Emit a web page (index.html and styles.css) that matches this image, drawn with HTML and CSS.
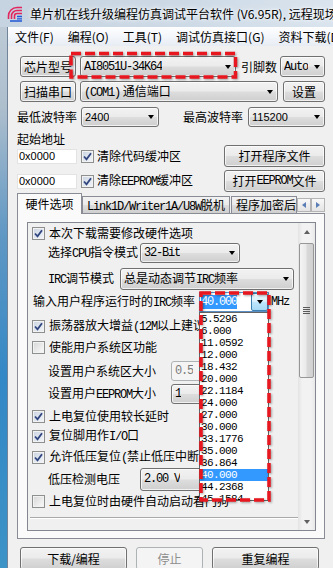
FILE: index.html
```html
<!DOCTYPE html>
<html lang="zh">
<head>
    <meta charset="UTF-8">
    <meta name="viewport" content="width=device-width, initial-scale=1.0">
    <title>STC-ISP</title>
    <link rel="stylesheet" href="styles.css">
</head>
<body>
<div class="window">
    <div class="titlebar">
        <svg class="app-icon" viewBox="0 0 16 16">
            <g fill="none" stroke="#e2275f" stroke-width="1.6">
                <path d="M1.5 13 V10 A8.5 8.5 0 0 1 10 1.5 H15"/>
                <path d="M4.5 13 V10 A5.5 5.5 0 0 1 10 4.5 H15"/>
                <path d="M7.5 13 V10 A2.5 2.5 0 0 1 10 7.5 H15"/>
            </g>
            <path d="M3 15 H15 M10 10.5 H15 M10 12.8 H15" stroke="#2257d6" stroke-width="1.3"/>
        </svg>
        <span class="title">单片机在线升级编程仿真调试平台软件 (V6.95R), 远程现场升级</span>
    </div>
    <div class="frame-left"></div>
    <div class="client">
        <div class="menubar">
            <span>文件(F)</span>
            <span>编程(O)</span>
            <span>工具(T)</span>
            <span>调试仿真接口(G)</span>
            <span>资料下载(D)</span>
        </div>

        <div class="main">
            <div class="row r-chip">
                <div class="btn b-side">芯片型号</div>
                <div class="combo c-chip"><span class="val en">AI8051U-34K64</span></div>
                <span class="pins-lbl">引脚数</span>
                <div class="combo c-pins"><span class="val en">Auto</span></div>
            </div>
            <div class="row r-port">
                <div class="btn b-side">扫描串口</div>
                <div class="combo c-port"><span class="val"><span class="en">(COM1)</span> 通信端口</span></div>
                <div class="btn b-set">设置</div>
            </div>
            <div class="row r-baud">
                <span class="baud-lbl">最低波特率</span>
                <div class="combo c-baud"><span class="val sans">2400</span></div>
                <span class="baud-lbl baud-hi">最高波特率</span>
                <div class="combo c-baud"><span class="val sans">115200</span></div>
            </div>
            <div class="addr-lbl">起始地址</div>
            <div class="row r-file">
                <div class="edit sans">0x0000</div>
                <span class="chk on"><svg viewBox="0 0 11 11"><path d="M2 5.5 L4.5 8.3 L9 2.2"/></svg></span>
                <span>清除代码缓冲区</span>
                <div class="btn b-file">打开程序文件</div>
            </div>
            <div class="row r-file">
                <div class="edit sans">0x0000</div>
                <span class="chk on"><svg viewBox="0 0 11 11"><path d="M2 5.5 L4.5 8.3 L9 2.2"/></svg></span>
                <span>清除<span class="en">EEPROM</span>缓冲区</span>
                <div class="btn b-file">打开<span class="en">EEPROM</span>文件</div>
            </div>

            <div class="tabs">
                <div class="tab on">硬件选项</div>
                <div class="tab t-link"><span class="en">Link1D/Writer1A/U8W</span>脱机</div>
                <div class="tab t-enc">程序加密后传输</div>
                <div class="tab-spin">
                    <span class="spin-btn"><i class="tri-l"></i></span>
                    <span class="spin-btn"><i class="tri-r"></i></span>
                </div>
            </div>
            <div class="tabpanel">
                <div class="optbox">
                    <div class="opts">
                        <div class="opt">
                            <span class="chk on"><svg viewBox="0 0 11 11"><path d="M2 5.5 L4.5 8.3 L9 2.2"/></svg></span>
                            <span>本次下载需要修改硬件选项</span>
                        </div>
                        <div class="opt ind">
                            <span class="lbl w92">选择<span class="en">CPU</span>指令模式</span>
                            <div class="combo c-cpu"><span class="val en">32-Bit</span></div>
                        </div>
                        <div class="opt ind mt6">
                            <span class="lbl w72"><span class="en">IRC</span>调节模式</span>
                            <div class="combo c-irc"><span class="val">总是动态调节<span class="en">IRC</span>频率</span></div>
                        </div>
                        <div class="opt sub mt3">
                            <span class="lbl w166">输入用户程序运行时的<span class="en">IRC</span>频率</span>
                            <div class="combo open">
                                <span class="val en"><span class="sel">40.000</span></span>
                                <span class="dropbtn"></span>
                                <div class="droplist">
                                    <div>5.5296</div>
                                    <div>6.000</div>
                                    <div>11.0592</div>
                                    <div>12.000</div>
                                    <div>18.432</div>
                                    <div>20.000</div>
                                    <div>22.1184</div>
                                    <div>24.000</div>
                                    <div>27.000</div>
                                    <div>30.000</div>
                                    <div>33.1776</div>
                                    <div>35.000</div>
                                    <div>36.864</div>
                                    <div class="hi">40.000</div>
                                    <div>44.2368</div>
                                    <div>45.1584</div>
                                </div>
                            </div>
                            <span class="en mhz">MHz</span>
                        </div>
                        <div class="opt mt4">
                            <span class="chk on"><svg viewBox="0 0 11 11"><path d="M2 5.5 L4.5 8.3 L9 2.2"/></svg></span>
                            <span>振荡器放大增益<span class="en">(12M</span>以上建议选择<span class="en">)</span></span>
                        </div>
                        <div class="opt mt1">
                            <span class="chk"></span>
                            <span>使能用户系统区功能</span>
                        </div>
                        <div class="opt ind mt4">
                            <span class="lbl w123">设置用户系统区大小</span>
                            <div class="combo c-small off"><span class="val en">0.5</span></div>
                        </div>
                        <div class="opt ind mt3">
                            <span class="lbl w123">设置用户<span class="en">EEPROM</span>大小</span>
                            <div class="combo c-small"><span class="val en">1</span></div>
                        </div>
                        <div class="opt mt2">
                            <span class="chk on"><svg viewBox="0 0 11 11"><path d="M2 5.5 L4.5 8.3 L9 2.2"/></svg></span>
                            <span>上电复位使用较长延时</span>
                        </div>
                        <div class="opt">
                            <span class="chk on"><svg viewBox="0 0 11 11"><path d="M2 5.5 L4.5 8.3 L9 2.2"/></svg></span>
                            <span>复位脚用作<span class="en">I/O</span>口</span>
                        </div>
                        <div class="opt mt1">
                            <span class="chk on"><svg viewBox="0 0 11 11"><path d="M2 5.5 L4.5 8.3 L9 2.2"/></svg></span>
                            <span>允许低压复位<span class="en">(</span>禁止低压中断<span class="en">)</span></span>
                        </div>
                        <div class="opt ind mt2">
                            <span class="lbl w92">低压检测电压</span>
                            <div class="combo c-volt"><span class="val en">2.00 V</span></div>
                        </div>
                        <div class="opt mt2">
                            <span class="chk"></span>
                            <span>上电复位时由硬件自动启动看门狗</span>
                        </div>
                        <div class="opt-sep"></div>
                    </div>
                    <div class="vscroll">
                        <div class="sb-arrow"><i class="tri-up"></i></div>
                        <div class="sb-thumb"><i class="grip"></i></div>
                        <div class="sb-arrow sb-down"><i class="tri-down"></i></div>
                    </div>
                </div>
            </div>

            <div class="row r-actions">
                <div class="btn b-act">下载/编程</div>
                <div class="btn b-stop off">停止</div>
                <div class="btn b-act">重复编程</div>
            </div>
        </div>
    </div>

    <svg class="marks" width="333" height="568" viewBox="0 0 333 568">
        <rect x="71" y="53.5" width="164.5" height="23.5"/>
        <rect x="201" y="293" width="68" height="207"/>
    </svg>
</div>
</body>
</html>
```

FILE: styles.css
```css
* {
    box-sizing: border-box;
}
body {
    margin: 0;
    font-family: "Noto Sans CJK SC", "Noto Sans", sans-serif;
    font-size: 12px;
    line-height: 14px;
    color: #000;
}
.en {
    font-family: "Liberation Mono", monospace;
    font-size: 12px;
    letter-spacing: -1.2px;
}
.sans {
    font-family: "Liberation Sans", Arial, sans-serif;
    font-size: 11px;
}

/* window frame */
.window {
    position: relative;
    width: 333px;
    height: 568px;
    overflow: hidden;
    display: grid;
    grid-template-columns: 8px 325px;
    grid-template-rows: 27px 541px;
}
.titlebar {
    grid-column: 1 / 3;
    display: flex;
    align-items: center;
    padding-left: 7px;
    white-space: nowrap;
    overflow: hidden;
    background: linear-gradient(90deg, #c6d3e0 0%, #cddae6 55%, #dae4ee 100%);
}
.app-icon {
    flex: none;
    width: 16px;
    height: 16px;
    margin-right: 7px;
}
.title {
    text-shadow: 0 0 6px #fff, 0 0 3px #fff;
}
.frame-left {
    background: linear-gradient(#bdcad6 0%, #adbecd 15%, #6198c4 38%, #3388c6 65%, #3c93c6 100%);
    border-right: 1px solid #71849a;
}
.client {
    background: #f0f0f0;
    overflow: hidden;
}
.menubar {
    height: 19px;
    display: flex;
    align-items: center;
    gap: 14px;
    padding-left: 7px;
    white-space: nowrap;
    background: linear-gradient(#fefeff, #f3f6fa 50%, #e7ecf4);
}

/* main controls */
.main {
    padding: 0 8px 0 9px;
}
.row {
    display: flex;
    align-items: center;
    white-space: nowrap;
}
.r-chip {
    height: 21px;
    margin-top: 10px;
    padding-left: 3px;
}
.r-port {
    height: 21px;
    margin-top: 4px;
    padding-left: 3px;
}
.r-baud {
    height: 20px;
    margin-top: 5px;
}
.addr-lbl {
    height: 13px;
    line-height: 13px;
    margin-top: 5px;
}
.r-file {
    height: 22px;
}
.r-file + .r-file {
    margin-top: 3px;
}
.r-actions {
    height: 23px;
    margin-top: 8px;
    padding-left: 3px;
}

.btn {
    height: 100%;
    flex: none;
    display: flex;
    align-items: center;
    justify-content: center;
    border: 1px solid #707070;
    border-radius: 3px;
    background: linear-gradient(#f2f2f2, #ebebeb 48%, #dddddd 52%, #cfcfcf);
    box-shadow: inset 0 0 0 1px rgba(255, 255, 255, 0.7);
}
.btn.off {
    color: #8d8d8d;
    border-color: #adb2b5;
    background: #f4f4f4;
    box-shadow: none;
}
.b-side { width: 56px; }
.b-set { width: 42px; margin-left: 5px; }
.b-file { width: 101px; margin-left: auto; }
.b-act { width: 107px; }
.b-stop { width: 67px; margin: 0 9px; }

.combo {
    height: 100%;
    flex: none;
    display: flex;
    align-items: center;
    padding-left: 3px;
    border: 1px solid #707070;
    border-radius: 3px;
    background: linear-gradient(#f2f2f2, #ebebeb 48%, #dddddd 52%, #cfcfcf);
    box-shadow: inset 0 0 0 1px rgba(255, 255, 255, 0.7);
}
.combo::after {
    content: "";
    flex: none;
    margin-left: auto;
    margin-right: 4px;
    border-left: 3.5px solid transparent;
    border-right: 3.5px solid transparent;
    border-top: 4px solid #000;
}
.combo .val {
    overflow: hidden;
}
.combo.off {
    color: #7a7a7a;
    border-color: #adb2b5;
    background: #f4f4f4;
    box-shadow: none;
}
.combo.off::after {
    border-top-color: #a0a0a0;
}
.c-chip { width: 156px; margin-left: 4px; }
.pins-lbl { margin-left: 5px; }
.c-pins { width: 45px; margin-left: 3px; }
.c-port { width: 198px; margin-left: 4px; }
.baud-lbl { width: 64px; }
.baud-hi { width: 65px; margin-left: 24px; }
.c-baud { width: 78px; }
.c-baud + .baud-hi + .c-baud { width: 77px; }

.edit {
    width: 60px;
    height: 15px;
    margin-right: 4px;
    padding-left: 1px;
    line-height: 13px;
    background: #fff;
    border: 1px solid #e3e3e3;
}

.chk {
    flex: none;
    width: 13px;
    height: 13px;
    margin-right: 3px;
    border: 1px solid #8e8f8f;
    background: linear-gradient(135deg, #d6d6d6, #fbfbfb);
    box-shadow: inset 0 0 0 1px #f2f2f2;
}
.chk.on {
    background: linear-gradient(135deg, #c9d3e0, #f4f7fb);
}
.chk svg {
    display: block;
    width: 11px;
    height: 11px;
}
.chk path {
    fill: none;
    stroke: #31467f;
    stroke-width: 1.8;
}

/* tabs */
.tabs {
    position: relative;
    z-index: 1;
    display: flex;
    align-items: flex-end;
    height: 20px;
    margin-top: 1px;
    white-space: nowrap;
}
.tab {
    flex: none;
    height: 17px;
    padding-left: 4px;
    line-height: 15px;
    overflow: hidden;
    border: 1px solid #898c95;
    border-bottom: none;
    background: linear-gradient(#f2f2f2, #ebebeb 48%, #dddddd 52%, #cfcfcf);
}
.tab.on {
    width: 65px;
    height: 21px;
    margin-bottom: -1px;
    padding: 0;
    line-height: 19px;
    text-align: center;
    background: #fafafa;
}
.t-link { width: 148px; }
.t-enc { width: 66px; margin-left: 1px; padding-left: 4px; }
.tab-spin {
    display: flex;
    height: 14px;
    margin-bottom: 1px;
}
.spin-btn {
    width: 14px;
    height: 14px;
    display: flex;
    align-items: center;
    justify-content: center;
    border: 1px solid #b4b4b4;
    background: linear-gradient(#f8f8f8, #e4e4e4);
}
.tri-l {
    border-top: 3.5px solid transparent;
    border-bottom: 3.5px solid transparent;
    border-right: 4px solid #5a7db5;
}
.tri-r {
    border-top: 3.5px solid transparent;
    border-bottom: 3.5px solid transparent;
    border-left: 4px solid #5a7db5;
}

.tabpanel {
    display: flex;
    height: 326px;
    padding: 8px 8px 7px 9px;
    border: 1px solid #898c95;
    background: #fafafa;
}
.optbox {
    flex: 1;
    display: flex;
    border: 1px solid #828790;
    background: #f0f0f0;
}
.opts {
    flex: 1;
    min-width: 0;
}
.opt {
    height: 20px;
    display: flex;
    align-items: center;
    padding-left: 4px;
    white-space: nowrap;
}
.opt .chk {
    margin-right: 4px;
}
.opt.ind { padding-left: 20px; }
.opt.sub { padding-left: 5px; }
.mt1 { margin-top: 1px; }
.mt2 { margin-top: 2px; }
.mt3 { margin-top: 3px; }
.mt4 { margin-top: 4px; }
.mt6 { margin-top: 6px; }
.lbl { flex: none; }
.w72 { width: 72px; }
.w92 { width: 92px; }
.w123 { width: 123px; }
.w166 { width: 166px; }
.c-cpu { width: 100px; }
.c-irc { width: 174px; height: 22px; }
.c-small { width: 60px; }
.c-volt { width: 80px; height: 23px; }
.mhz { margin-left: 2px; }

/* open frequency combo */
.combo.open {
    position: relative;
    width: 70px;
    padding-left: 1px;
    border: 1px solid #5b8fc4;
    border-radius: 0;
    background: #fff;
    box-shadow: none;
}
.combo.open::after {
    display: none;
}
.sel {
    background: #3399ff;
    color: #fff;
}
.dropbtn {
    margin-left: auto;
    width: 17px;
    height: 18px;
    display: flex;
    align-items: center;
    justify-content: center;
    border: 1px solid #3c7fb1;
    border-radius: 2px;
    background: linear-gradient(#eaf6fd, #d9f0fc 48%, #bee6fd 52%, #a7d9f5);
}
.dropbtn::after {
    content: "";
    border-left: 3.5px solid transparent;
    border-right: 3.5px solid transparent;
    border-top: 4px solid #000;
}
.droplist {
    position: absolute;
    z-index: 5;
    left: -1px;
    top: 19px;
    width: 70px;
    height: 189px;
    overflow: hidden;
    border: 1px solid #646464;
    background: #fff;
    color: #000;
    font-family: "Liberation Mono", monospace;
    font-size: 11px;
    letter-spacing: -0.6px;
}
.droplist div {
    height: 12px;
    line-height: 12px;
    padding-left: 1px;
}
.droplist .hi {
    background: #3399ff;
    color: #fff;
}

.opt-sep {
    height: 2px;
    margin: 6px 0 0 2px;
    border-top: 1px solid #a9a9a9;
    border-bottom: 1px solid #fff;
}

/* scrollbar */
.vscroll {
    flex: none;
    width: 17px;
    display: flex;
    flex-direction: column;
    background: linear-gradient(90deg, #e3e3e3, #f2f2f2 25%, #f2f2f2 75%, #e8e8e8);
}
.sb-arrow {
    flex: none;
    height: 17px;
    display: flex;
    align-items: center;
    justify-content: center;
}
.sb-down {
    margin-top: auto;
}
.tri-up {
    border-left: 3.5px solid transparent;
    border-right: 3.5px solid transparent;
    border-bottom: 4px solid #606060;
}
.tri-down {
    border-left: 3.5px solid transparent;
    border-right: 3.5px solid transparent;
    border-top: 4px solid #606060;
}
.sb-thumb {
    height: 135px;
    margin: 3px 1px 0;
    display: flex;
    align-items: center;
    justify-content: center;
    border: 1px solid #979797;
    border-radius: 2px;
    background: linear-gradient(90deg, #f4f4f4, #e9e9e9 48%, #d9d9d9 52%, #d0d0d0);
}
.grip {
    width: 7px;
    height: 7px;
    background: repeating-linear-gradient(#5a5a5a 0 1px, transparent 1px 2px);
}

/* red annotation boxes */
.marks {
    position: absolute;
    left: 0;
    top: 0;
    z-index: 10;
    pointer-events: none;
    filter: drop-shadow(1px 1px 1px rgba(0, 0, 0, 0.35));
}
.marks rect {
    fill: none;
    stroke: #e8161e;
    stroke-width: 3.5;
    stroke-dasharray: 10 4;
}
```
